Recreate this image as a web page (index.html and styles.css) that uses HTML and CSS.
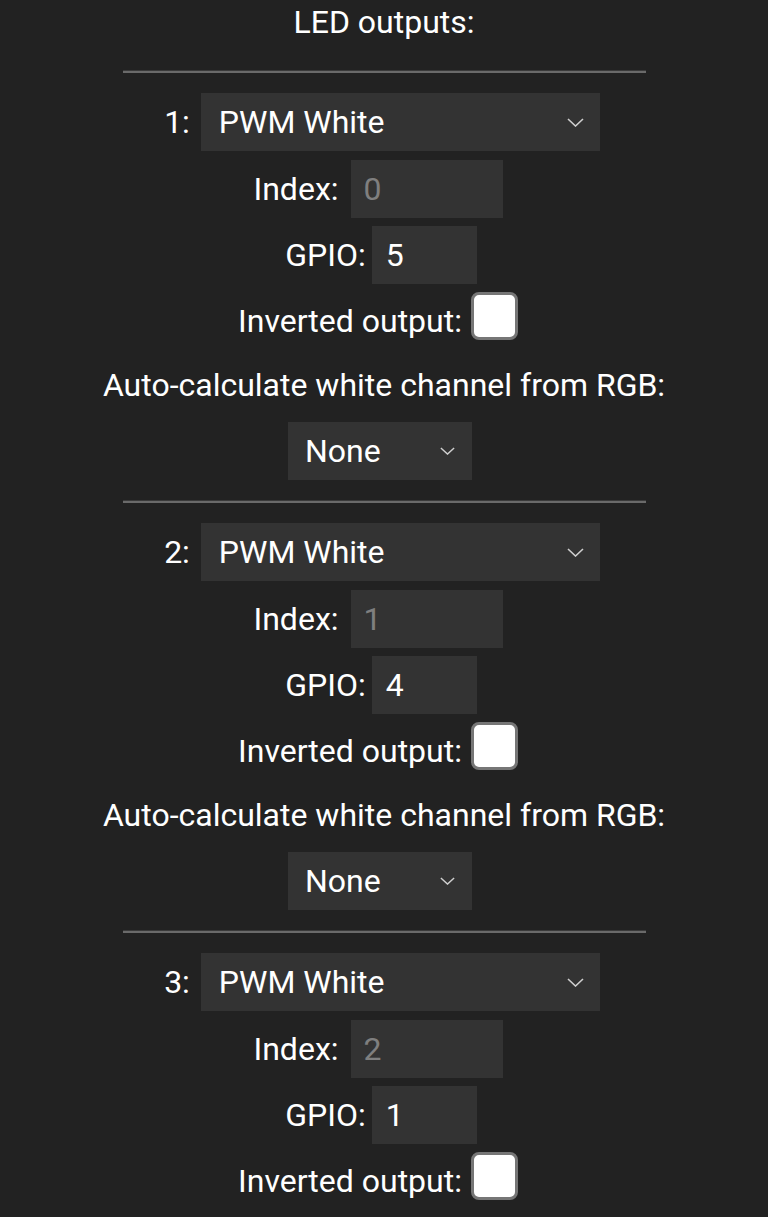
FILE: index.html
```html
<!DOCTYPE html>
<html lang="en">
<head>
<meta charset="utf-8">
<title>LED outputs</title>
<link rel="stylesheet" href="styles.css">
</head>
<body>
<main class="page">
  <h2 class="title">LED outputs:</h2>

  <section class="output">
    <div class="sep"></div>
    <div class="row row-type"><span class="num">1:</span><div class="select type"><span>PWM White</span><svg class="chev" viewBox="0 0 17 9"><path d="M1 1 L8.5 8 L16 1"/></svg></div></div>
    <div class="row row-index"><span>Index:</span><div class="field index disabled">0</div></div>
    <div class="row row-gpio"><span>GPIO:</span><div class="field gpio">5</div></div>
    <div class="row row-check"><span class="check-label">Inverted output:</span><span class="check"></span></div>
    <div class="auto">Auto-calculate white channel from RGB:</div>
    <div class="row row-none"><div class="select none"><span>None</span><svg class="chev" viewBox="0 0 17 9"><path d="M1 1 L8.5 8 L16 1"/></svg></div></div>
  </section>

  <section class="output">
    <div class="sep"></div>
    <div class="row row-type"><span class="num">2:</span><div class="select type"><span>PWM White</span><svg class="chev" viewBox="0 0 17 9"><path d="M1 1 L8.5 8 L16 1"/></svg></div></div>
    <div class="row row-index"><span>Index:</span><div class="field index disabled">1</div></div>
    <div class="row row-gpio"><span>GPIO:</span><div class="field gpio">4</div></div>
    <div class="row row-check"><span class="check-label">Inverted output:</span><span class="check"></span></div>
    <div class="auto">Auto-calculate white channel from RGB:</div>
    <div class="row row-none"><div class="select none"><span>None</span><svg class="chev" viewBox="0 0 17 9"><path d="M1 1 L8.5 8 L16 1"/></svg></div></div>
  </section>

  <section class="output">
    <div class="sep"></div>
    <div class="row row-type"><span class="num">3:</span><div class="select type"><span>PWM White</span><svg class="chev" viewBox="0 0 17 9"><path d="M1 1 L8.5 8 L16 1"/></svg></div></div>
    <div class="row row-index"><span>Index:</span><div class="field index disabled">2</div></div>
    <div class="row row-gpio"><span>GPIO:</span><div class="field gpio">1</div></div>
    <div class="row row-check"><span class="check-label">Inverted output:</span><span class="check"></span></div>
  </section>
</main>
</body>
</html>
```

FILE: styles.css
```css
html, body {
  margin: 0;
  padding: 0;
  background: #222222;
  height: 100%;
  overflow: hidden;
}

body {
  color: #ffffff;
  font-family: Roboto, "Noto Sans", "Liberation Sans", sans-serif;
  font-size: 32px;
}

.page {
  display: flex;
  flex-direction: column;
  align-items: center;
}

.title {
  margin: 0 0 26px 0;
  height: 44px;
  line-height: 44px;
  font-size: 32px;
  font-weight: 400;
}

.output {
  display: flex;
  flex-direction: column;
  align-items: center;
  width: 100%;
}

.sep {
  width: 523px;
  height: 0;
  border-top: 1px solid #3a3a3a;
  border-bottom: 2px solid #6a6a6a;
  margin-bottom: 20px;
}

.row {
  display: flex;
  align-items: center;
  white-space: nowrap;
}

.row-type { height: 58px; gap: 11px; padding-left: 1px; padding-right: 5px; }
.row-index { height: 58px; gap: 12px; margin-top: 9px; padding-right: 12px; }
.row-gpio { height: 58px; gap: 6px; margin-top: 8px; padding-right: 6px; }
.row-check { height: 48px; gap: 9px; margin-top: 8px; padding-right: 12px; }
.row-none { height: 58px; margin-top: 9px; padding-right: 8px; margin-bottom: 20px; }

.check-label {
  padding-top: 10px;
}

.auto {
  margin-top: 17px;
  height: 56px;
  line-height: 56px;
  white-space: nowrap;
}

.select {
  display: flex;
  align-items: center;
  justify-content: space-between;
  box-sizing: border-box;
  height: 58px;
  background: #333333;
}

.select.type {
  width: 399px;
  padding: 0 16px 0 18px;
}

.select.none {
  width: 184px;
  padding: 0 17px 0 17px;
}

.chev {
  width: 17px;
  height: 9px;
  fill: none;
  stroke: #cfcfcf;
  stroke-width: 1.6;
}

.select.none .chev {
  width: 15px;
  height: 8px;
}

.field {
  box-sizing: border-box;
  height: 58px;
  line-height: 58px;
  background: #333333;
  padding-left: 13px;
}

.field.index { width: 152px; }
.field.gpio { width: 105px; padding-left: 14px; }
.field.disabled { color: #7f7f7f; }

.check {
  box-sizing: border-box;
  width: 47px;
  height: 48px;
  background: #ffffff;
  border: 3px solid #767676;
  border-radius: 8px;
}
```
